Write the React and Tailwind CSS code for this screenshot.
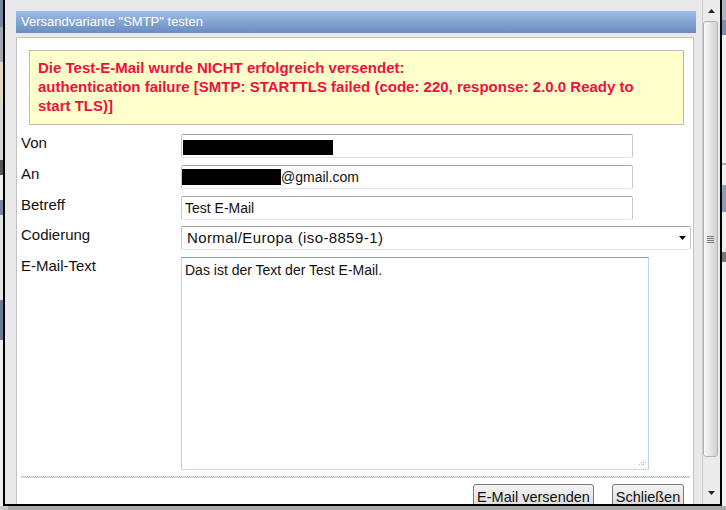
import React from 'react';

const field = "h-[24px] border border-t-[#a5a5a5] border-x-[#c6c6c6] border-b-[#e0e6ee] rounded-[2px] bg-white flex items-center text-[14px] text-[#111]";

function LeftStrip() {
    return (
        <div className="w-[3px] h-[506px] flex flex-col">
            <div className="h-[27px] bg-[#7585a0]" />
            <div className="h-[35px] bg-[#a4a8ae]" />
            <div className="h-[41px] bg-[#dedbc2]" />
            <div className="h-[57px] bg-[#d6d6d6]" />
            <div className="h-[15px] bg-[#555]" />
            <div className="h-[25px] bg-[#eeeeee]" />
            <div className="h-[15px] bg-[#7585a0]" />
            <div className="h-[85px] bg-[#e2e2e2]" />
            <div className="h-[40px] bg-[#6a7a95]" />
            <div className="flex-1 bg-[#efefef]" />
        </div>
    );
}

function RightStrip() {
    return (
        <div className="w-[4px] h-[506px] flex flex-col">
            <div className="h-[20px] bg-[#a7b5c9]" />
            <div className="h-[15px] bg-[#7b8dab]" />
            <div className="h-[128px] bg-[#f0f0f0]" />
            <div className="h-[2px] bg-[#aaa]" />
            <div className="h-[20px] bg-[#f0f0f0]" />
            <div className="h-[27px] bg-[#8d9db6]" />
            <div className="h-[40px] bg-[#eeeeee]" />
            <div className="h-[10px] bg-[#777]" />
            <div className="flex-1 bg-[#f2f2f2]" />
        </div>
    );
}

function Scrollbar() {
    return (
        <div className="w-[18px] h-[504px] flex flex-col bg-[#ebebeb] border-l border-[#cbcbcb]">
            <div className="h-[21px] shrink-0 flex items-center justify-center">
                <svg width="7" height="4" viewBox="0 0 7 4"><path d="M3.5 0L7 4H0z" fill="#222" /></svg>
            </div>
            <div className="h-[436px] shrink-0 w-[15px] rounded-[3px] border border-[#b4b4b4] bg-gradient-to-r from-[#f8f8f8] to-[#d0d0d0] flex items-center justify-center">
                <div className="flex flex-col gap-[1px]">
                    <div className="w-[7px] h-[1px] bg-[#777]" />
                    <div className="w-[7px] h-[1px] bg-[#777]" />
                    <div className="w-[7px] h-[1px] bg-[#777]" />
                    <div className="w-[7px] h-[1px] bg-[#777]" />
                </div>
            </div>
            <div className="flex-1" />
            <div className="h-[22px] shrink-0 flex items-center justify-center">
                <svg width="7" height="4" viewBox="0 0 7 4"><path d="M0 0H7L3.5 4z" fill="#222" /></svg>
            </div>
        </div>
    );
}

function Row({ label, children, className = "" }) {
    return (
        <div className={"flex items-start shrink-0 " + className}>
            <div className="w-[160px] text-[15px] leading-[17px] text-[#111]">{label}</div>
            {children}
        </div>
    );
}

function Dialog() {
    return (
        <div className="w-[680px] h-[504px] flex flex-col">
            <div className="h-[11px] shrink-0" />
            <div className="h-[22px] shrink-0 bg-gradient-to-b from-[#9dbde6] to-[#6a8cbf] text-white text-[13px] leading-[22px] pl-[5px]">
                Versandvariante "SMTP" testen
            </div>
            <div className="h-[4px] shrink-0" />
            <div className="flex-1 min-h-0 overflow-hidden mr-[2px] bg-white border-l border-t border-r border-[#c2c2c2] flex flex-col">
                <div className="shrink-0 mt-[12px] ml-[12px] w-[655px] h-[75px] border border-[#bcbcbc] bg-[#ffffcc] pl-[8px] pt-[7px] text-[15px] leading-[19px] font-bold text-[#f0103e]">
                    Die Test-E-Mail wurde NICHT erfolgreich versendet:<br />
                    authentication failure [SMTP: STARTTLS failed (code: 220, response: 2.0.0 Ready to<br />
                    start TLS)]
                </div>

                <div className="shrink-0 pl-[4px] mt-[9px] flex flex-col">
                    <Row label="Von">
                        <div className={field + " w-[452px] pl-[1px]"}>
                            <div className="w-[150px] h-[15px] bg-black mt-[2px]" />
                        </div>
                    </Row>
                    <Row label="An" className="mt-[7px]">
                        <div className={field + " w-[452px]"}>
                            <div className="w-[99px] h-[16px] bg-black" />
                            <span>@gmail.com</span>
                        </div>
                    </Row>
                    <Row label="Betreff" className="mt-[7px]">
                        <div className={field + " w-[452px] pl-[3px]"}>Test E-Mail</div>
                    </Row>
                    <Row label="Codierung" className="mt-[6px]">
                        <div className={field + " w-[510px] pl-[5px] pr-[4px] justify-between"}>
                            <span className="text-[15px] tracking-[0.4px]">Normal/Europa (iso-8859-1)</span>
                            <svg width="7" height="4" viewBox="0 0 7 4"><path d="M0 0H7L3.5 4z" fill="#000" /></svg>
                        </div>
                    </Row>
                    <Row label="E-Mail-Text" className="mt-[7px]">
                        <div className="relative w-[468px] h-[213px] border border-t-[#78a4cf] border-x-[#b9d3ea] border-b-[#c6dbed] bg-white pl-[3px] pt-[4px] text-[14px] leading-[16px] text-[#111]">
                            Das ist der Text der Test E-Mail.
                            <svg className="absolute right-[3px] bottom-[3px]" width="7" height="7" viewBox="0 0 7 7">
                                <rect x="5" y="1" width="1" height="1" fill="#b8b8b8" />
                                <rect x="3" y="3" width="1" height="1" fill="#b8b8b8" />
                                <rect x="5" y="3" width="1" height="1" fill="#b8b8b8" />
                                <rect x="1" y="5" width="1" height="1" fill="#b8b8b8" />
                                <rect x="3" y="5" width="1" height="1" fill="#b8b8b8" />
                                <rect x="5" y="5" width="1" height="1" fill="#b8b8b8" />
                            </svg>
                        </div>
                    </Row>
                </div>

                <div className="shrink-0 mt-[6px] ml-[4px] w-[669px] flex flex-col">
                    <div className="h-[1px] bg-[repeating-linear-gradient(90deg,#a8a8a8_0px,#a8a8a8_1px,#ffffff_1px,#ffffff_2px)]" />
                    <div className="h-[1px] bg-[repeating-linear-gradient(90deg,#ffffff_0px,#ffffff_1px,#a8a8a8_1px,#a8a8a8_2px)]" />
                </div>

                <div className="shrink-0 mt-[6px] flex justify-end gap-[18px] pr-[9px]">
                    <div className="w-[121px] h-[26px] border border-[#7a7a7a] rounded-[3px] bg-gradient-to-b from-[#f4f4f4] to-[#dadada] text-[14.5px] leading-[24px] text-center text-[#111]">
                        E-Mail versenden
                    </div>
                    <div className="w-[72px] h-[26px] border border-[#7a7a7a] rounded-[3px] bg-gradient-to-b from-[#f4f4f4] to-[#dadada] text-[14.5px] leading-[24px] text-center text-[#111]">
                        Schließen
                    </div>
                </div>
            </div>
        </div>
    );
}

export default function App() {
    return (
        <div className="w-[726px] h-[510px] overflow-hidden flex flex-col bg-[#a9a9a9] font-['Liberation_Sans',Arial,sans-serif]">
            <div className="flex h-[506px] shrink-0">
                <LeftStrip />
                <div className="w-[719px] h-[506px] border-x-2 border-b-2 border-black bg-[#e9e9e9] flex">
                    <div className="w-[11px]" />
                    <Dialog />
                    <div className="w-[6px]" />
                    <Scrollbar />
                </div>
                <RightStrip />
            </div>
            <div className="h-[4px] shrink-0 flex">
                <div className="w-[8px] bg-[#cacaca]" />
                <div className="flex-1 bg-[#a9a9a9]" />
            </div>
        </div>
    );
}
